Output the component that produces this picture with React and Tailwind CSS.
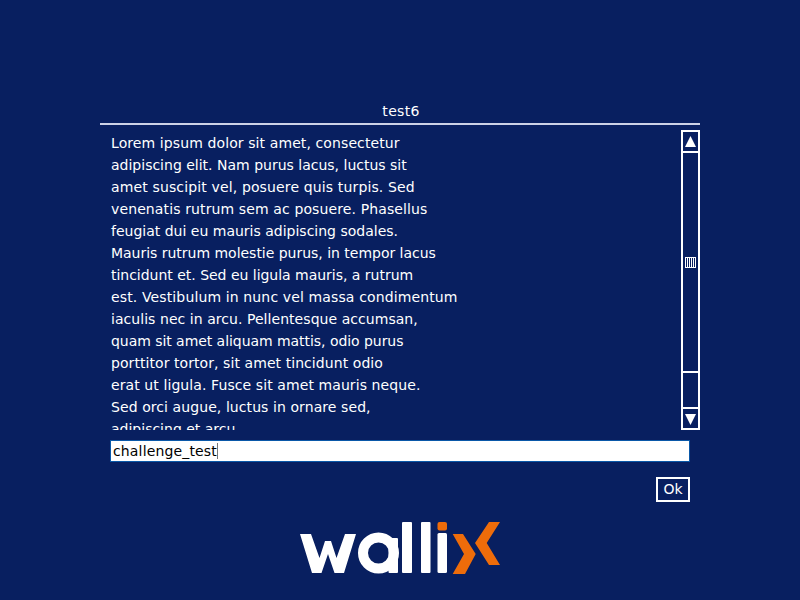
// tracking per line: the reference font has whole-pixel advances, so each line runs a bit wider or narrower
const LINES = [
  ['Lorem ipsum dolor sit amet, consectetur', 'tracking-[0.1px]'],
  ['adipiscing elit. Nam purus lacus, luctus sit', 'tracking-normal'],
  ['amet suscipit vel, posuere quis turpis. Sed', 'tracking-[0.14px]'],
  ['venenatis rutrum sem ac posuere. Phasellus', 'tracking-[0.12px]'],
  ['feugiat dui eu mauris adipiscing sodales.', 'tracking-normal'],
  ['Mauris rutrum molestie purus, in tempor lacus', 'tracking-[-0.02px]'],
  ['tincidunt et. Sed eu ligula mauris, a rutrum', 'tracking-[-0.02px]'],
  ['est. Vestibulum in nunc vel massa condimentum', 'tracking-[0.13px]'],
  ['iaculis nec in arcu. Pellentesque accumsan,', 'tracking-[0.05px]'],
  ['quam sit amet aliquam mattis, odio purus', 'tracking-[-0.05px]'],
  ['porttitor tortor, sit amet tincidunt odio', 'tracking-[0.07px]'],
  ['erat ut ligula. Fusce sit amet mauris neque.', 'tracking-[0.09px]'],
  ['Sed orci augue, luctus in ornare sed,', 'tracking-[0.08px]'],
  ['adipiscing et arcu.', 'tracking-normal'],
];

function Arrow({ down }) {
  return (
    <svg width="11" height="12" viewBox="0 0 11 12" className="block">
      <path d={down ? 'M0 1H11L5.5 12Z' : 'M5.5 0L11 11H0Z'} fill="#fff" />
    </svg>
  );
}

function Scrollbar() {
  return (
    <div className="w-[19px] h-[300px] border-2 border-white flex flex-col">
      <div className="h-[21px] shrink-0 border-b-2 border-white flex items-center justify-center">
        <Arrow />
      </div>
      <div className="h-[220px] shrink-0 border-b-2 border-white flex items-center justify-center">
        <div className="w-[11px] h-[11px] border border-white flex justify-between px-[1px]">
          <span className="w-px bg-white" />
          <span className="w-px bg-white" />
          <span className="w-px bg-white" />
          <span className="w-px bg-white" />
        </div>
      </div>
      <div className="flex-1" />
      <div className="h-[21px] shrink-0 border-t-2 border-white flex items-center justify-center">
        <Arrow down />
      </div>
    </div>
  );
}

function Logo() {
  return (
    <svg width="200" height="56" viewBox="0 0 200 56" className="block" aria-label="wallix">
      <path
        d="M0 14H11L19.5 38L25 21H31L36.5 38L45 14H56L44 53H34.5L28 34L21.5 53H12Z"
        fill="#fff"
      />
      <circle cx="78.5" cy="33" r="15.5" fill="none" stroke="#fff" strokeWidth="10" />
      <rect x="88.5" y="18" width="9.5" height="35" rx="1" fill="#fff" />
      <rect x="102" y="2" width="10" height="51" rx="1" fill="#fff" />
      <rect x="121" y="2" width="9.5" height="51" rx="1" fill="#fff" />
      <rect x="137.5" y="13" width="9.5" height="40" rx="1.5" fill="#fff" />
      <rect x="137.5" y="2" width="9.5" height="8.5" rx="2" fill="#ee6c0a" />
      <path d="M152.7 14H163L175.7 34L165 54H152.7L164 34Z" fill="#ee6c0a" />
      <path d="M189 2H200L186.7 23L200 45H189L175 23Z" fill="#ee6c0a" />
    </svg>
  );
}

export default function App() {
  return (
    <div className="w-[800px] h-[600px] bg-[#081f60] text-white overflow-hidden flex flex-col items-center font-['DejaVu_Sans',sans-serif] text-[14px]">
      <div className="mt-[103px] h-[20px] pl-[2px] leading-[17px] text-center tracking-[0.3px]">test6</div>
      <div className="w-[600px] h-[2px] bg-[#ccd2e6]" />
      <div className="w-[600px] mt-[5px] h-[300px] flex justify-between">
        <div className="pl-[11px] h-[300px] overflow-hidden leading-[22px] pt-[2px]">
          {LINES.map(([text, tracking]) => (
            <div key={text} className={`whitespace-nowrap ${tracking}`}>{text}</div>
          ))}
        </div>
        <Scrollbar />
      </div>
      <div className="w-[580px] h-[22px] mt-[10px] bg-white border border-[#0a58a8] text-black pl-[2px] flex items-center tracking-[0.15px]">
        <span>challenge_test</span>
        <span className="w-px h-[16px] bg-[#777]" />
      </div>
      <div className="w-[580px] mt-[15px] flex justify-end">
        <div className="w-[34px] h-[25px] border-2 border-white flex items-center justify-center">Ok</div>
      </div>
      <div className="mt-[18px]">
        <Logo />
      </div>
    </div>
  );
}
